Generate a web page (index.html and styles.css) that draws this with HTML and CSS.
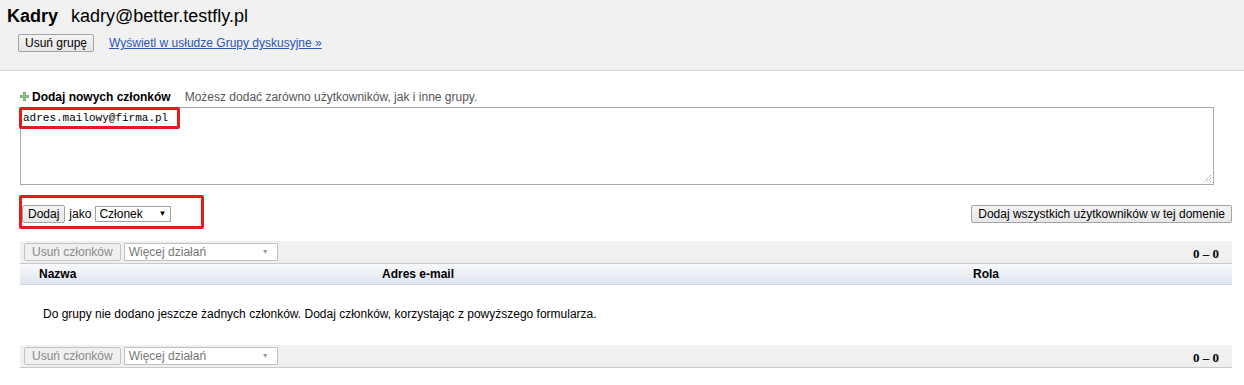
FILE: index.html
```html
<!DOCTYPE html>
<html lang="pl">
<head>
<meta charset="utf-8">
<title>Kadry</title>
<link rel="stylesheet" href="styles.css">
</head>
<body>
<div class="header">
  <div class="title"><span class="name">Kadry</span><span class="addr">kadry@better.testfly.pl</span></div>
  <div class="head-actions">
    <button class="btn">Usuń grupę</button>
    <a class="link" href="#">Wyświetl w usłudze Grupy dyskusyjne »</a>
  </div>
</div>
<div class="main">
  <div class="add-line">
    <svg class="plus" width="9" height="9" viewBox="0 0 9 9"><path d="M3 0h3v3h3v3H6v3H3V6H0V3h3z" fill="#6fa56f"/><path d="M3.5 0.5h2v3h3v2h-3v3h-2v-3h-3v-2h3z" fill="#8cc08c"/></svg>
    <span class="add-label">Dodaj nowych członków</span>
    <span class="add-hint">Możesz dodać zarówno użytkowników, jak i inne grupy.</span>
  </div>
  <div class="ta-wrap">
    <div class="textarea">adres.mailowy@firma.pl<svg class="grip" width="10" height="10" viewBox="0 0 10 10"><path d="M9 2L2 9M9 5L5 9M9 8L8 9" stroke="#777" stroke-width="1" stroke-dasharray="1 1"/></svg></div>
    <div class="mark mark-ta"></div>
  </div>
  <div class="add-row">
    <div class="add-left">
      <button class="btn btn-dodaj">Dodaj</button>
      <span class="jako">jako</span>
      <span class="select sel-role">Członek<span class="arrow">▼</span></span>
      <div class="mark mark-row"></div>
    </div>
    <button class="btn btn-all">Dodaj wszystkich użytkowników w tej domenie</button>
  </div>
  <div class="toolbar">
    <div class="tb-left">
      <button class="btn btn-dis">Usuń członków</button>
      <span class="select sel-dis">Więcej działań<span class="arrow">▼</span></span>
    </div>
    <span class="count">0 – 0</span>
  </div>
  <div class="cols">
    <span class="c-name">Nazwa</span>
    <span class="c-mail">Adres e-mail</span>
    <span class="c-role">Rola</span>
  </div>
  <div class="empty">Do grupy nie dodano jeszcze żadnych członków. Dodaj członków, korzystając z powyższego formularza.</div>
  <div class="toolbar toolbar-bottom">
    <div class="tb-left">
      <button class="btn btn-dis">Usuń członków</button>
      <span class="select sel-dis">Więcej działań<span class="arrow">▼</span></span>
    </div>
    <span class="count">0 – 0</span>
  </div>
</div>
</body>
</html>
```

FILE: styles.css
```css
* { box-sizing: border-box; }
body {
  margin: 0;
  background: #fff;
  font-family: "Liberation Sans", Arial, sans-serif;
  font-size: 12px;
  color: #000;
}
.header {
  background: #f1f1f1;
  border-bottom: 1px solid #d6d6d6;
  height: 71px;
  padding: 4px 0 0 7px;
}
.title {
  font-size: 18px;
  line-height: 24px;
  display: flex;
  gap: 13px;
}
.name { font-weight: bold; }
.head-actions {
  display: flex;
  align-items: center;
  gap: 15px;
  margin-top: 6px;
  padding-left: 11px;
}
.btn {
  font-family: "Liberation Sans", Arial, sans-serif;
  font-size: 12px;
  color: #000;
  background: linear-gradient(#f4f4f4, #e6e6e6);
  border: 1px solid #a3a3a3;
  border-radius: 2px;
  height: 18px;
  padding: 0 6px;
  line-height: 16px;
}
.link {
  color: #2a55b0;
  text-decoration: underline;
  font-size: 12px;
}
.main {
  padding: 0 12px 0 20px;
}
.add-line {
  display: flex;
  align-items: center;
  margin-top: 18px;
  height: 15px;
}
.plus { margin-right: 3px; }
.add-label { font-weight: bold; }
.add-hint { color: #555; margin-left: 14px; }
.ta-wrap {
  position: relative;
  margin-top: 3px;
  width: 1194px;
}
.textarea {
  position: relative;
  height: 78px;
  border: 1px solid #a9a9a9;
  font-family: "Liberation Mono", "DejaVu Sans Mono", monospace;
  font-size: 11px;
  line-height: 14px;
  padding: 3px 2px;
}
.grip { position: absolute; right: 1px; bottom: 1px; }
.mark {
  position: absolute;
  border: 3px solid #e21b1b;
  border-radius: 2px;
  pointer-events: none;
}
.mark-ta { left: -1px; top: 0; width: 161px; height: 22px; }
.add-row {
  display: flex;
  justify-content: space-between;
  align-items: center;
  margin-top: 20px;
  height: 18px;
}
.add-left {
  position: relative;
  display: flex;
  align-items: center;
  padding-left: 2px;
}
.mark-row { left: -1px; top: -10px; width: 185px; height: 34px; }
.btn-dodaj { padding: 0 5px; }
.jako { margin: 0 4px 0 4px; }
.select {
  display: inline-flex;
  align-items: center;
  justify-content: space-between;
  border: 1px solid #a3a3a3;
  background: #fff;
  height: 16px;
  padding: 0 4px 0 3px;
  line-height: 14px;
}
.sel-role { width: 76px; }
.arrow { font-size: 8px; color: #000; }
.toolbar {
  display: flex;
  justify-content: space-between;
  align-items: center;
  background: #f0f0f0;
  border-bottom: 1px solid #c9c9c9;
  height: 23px;
  margin-top: 18px;
  padding: 0 13px 0 4px;
}
.toolbar-bottom { margin-top: 0; }
.tb-left { display: flex; align-items: center; gap: 3px; }
.btn-dis {
  color: #8a8a8a;
  border-color: #c4c4c4;
  background: #f0f0f0;
  padding: 0 7px;
}
.sel-dis {
  width: 154px;
  color: #777;
  border-color: #c0c0c0;
  height: 18px;
  padding-left: 4px;
  padding-right: 8px;
}
.sel-dis .arrow { color: #999; font-size: 7px; }
.count {
  font-family: "Liberation Serif", "Times New Roman", serif;
  font-weight: bold;
  font-size: 13px;
  padding-top: 4px;
}
.cols {
  display: flex;
  align-items: center;
  height: 21px;
  background: linear-gradient(#f8f9fb, #dfe5ef);
  border-bottom: 1px solid #cdd2da;
  font-weight: bold;
}
.c-name { margin-left: 19px; width: 343px; }
.c-mail { width: 591px; }
.empty {
  padding: 22px 0 0 23px;
  height: 60px;
  line-height: 15px;
}
```
